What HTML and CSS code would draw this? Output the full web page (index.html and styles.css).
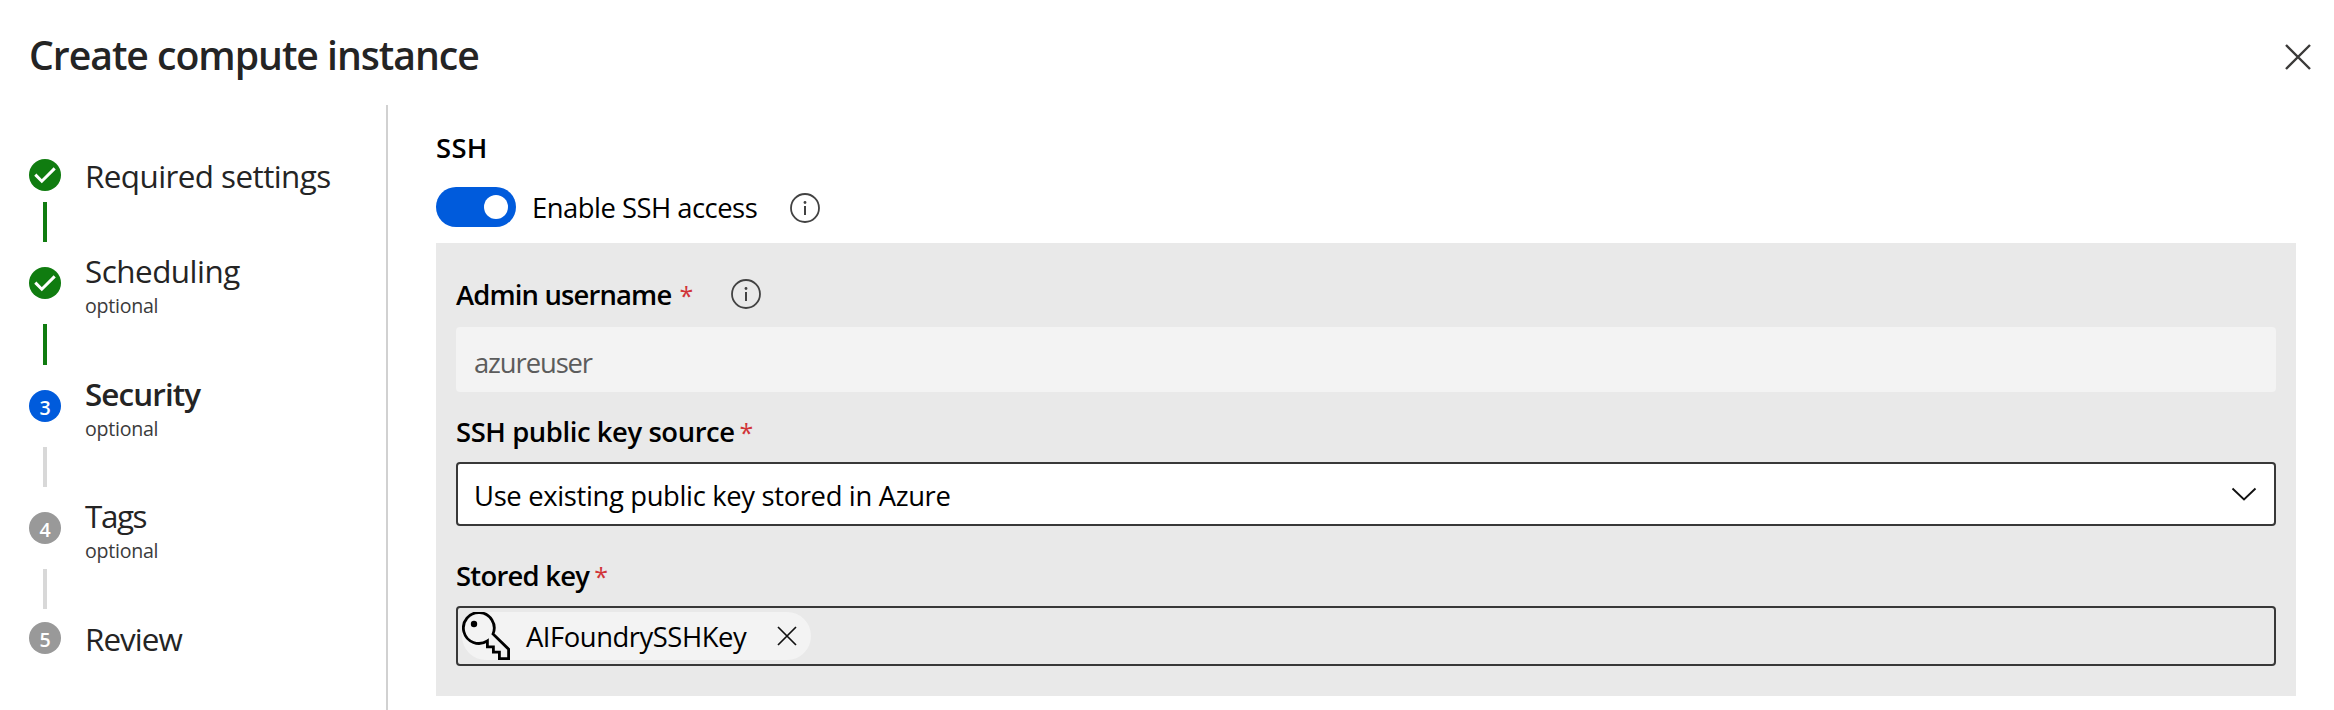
FILE: index.html
```html
<!DOCTYPE html>
<html lang="en">
<head>
<meta charset="utf-8">
<title>Create compute instance</title>
<link rel="stylesheet" href="styles.css">
</head>
<body>
<div class="dialog">
  <header class="header">
    <h1 class="title">Create compute instance</h1>
    <button class="icon-button" aria-label="Close">
      <svg width="28" height="28" viewBox="0 0 28 28"><path d="M2 2l24 24M26 2L2 26" fill="none" stroke="#3b3a39" stroke-width="2.4"/></svg>
    </button>
  </header>
  <div class="content">
    <nav class="steps">
      <div class="step step-single">
        <span class="marker done"><svg width="32" height="32" viewBox="0 0 32 32"><path d="M6.3 15.6l6.5 6.6L25.7 9.4" fill="none" stroke="#fff" stroke-width="3"/></svg></span>
        <div class="step-text"><div class="step-label required">Required settings</div></div>
      </div>
      <span class="connector first done"></span>
      <div class="step">
        <span class="marker done"><svg width="32" height="32" viewBox="0 0 32 32"><path d="M6.3 15.6l6.5 6.6L25.7 9.4" fill="none" stroke="#fff" stroke-width="3"/></svg></span>
        <div class="step-text"><div class="step-label scheduling">Scheduling</div><div class="optional">optional</div></div>
      </div>
      <span class="connector tall done"></span>
      <div class="step">
        <span class="marker current">3</span>
        <div class="step-text"><div class="step-label security">Security</div><div class="optional">optional</div></div>
      </div>
      <span class="connector"></span>
      <div class="step">
        <span class="marker">4</span>
        <div class="step-text"><div class="step-label tags">Tags</div><div class="optional">optional</div></div>
      </div>
      <span class="connector last"></span>
      <div class="step step-single">
        <span class="marker">5</span>
        <div class="step-text"><div class="step-label review">Review</div></div>
      </div>
    </nav>
    <main class="main">
      <h2 class="section-title">SSH</h2>
      <div class="toggle-row">
        <span class="toggle" role="switch" aria-checked="true"><span class="knob"></span></span>
        <span class="toggle-label">Enable SSH access</span>
        <svg class="info" width="30" height="30" viewBox="0 0 30 30"><circle cx="15" cy="15" r="14" fill="none" stroke="#424242" stroke-width="1.8"/><circle cx="15" cy="9.5" r="1.4" fill="#424242"/><path d="M15 13v9" stroke="#424242" stroke-width="2"/></svg>
      </div>
      <section class="panel">
        <div class="field-label">
          <span class="name-admin">Admin username</span><span class="star spaced">*</span>
          <svg class="info info-admin" width="30" height="30" viewBox="0 0 30 30"><circle cx="15" cy="15" r="14" fill="none" stroke="#424242" stroke-width="1.8"/><circle cx="15" cy="9.5" r="1.4" fill="#424242"/><path d="M15 13v9" stroke="#424242" stroke-width="2"/></svg>
        </div>
        <div class="input"><span class="user">azureuser</span></div>
        <div class="field-label source-label"><span class="name-source">SSH public key source</span><span class="star">*</span></div>
        <div class="select">
          <span class="source">Use existing public key stored in Azure</span>
          <svg width="26" height="14" viewBox="0 0 26 14"><path d="M1.5 1.5L13 12.5 24.5 1.5" fill="none" stroke="#111" stroke-width="1.9"/></svg>
        </div>
        <div class="field-label stored-label"><span class="name-stored">Stored key</span><span class="star">*</span></div>
        <div class="picker">
          <span class="chip">
            <svg width="48" height="48" viewBox="0 0 48 48"><circle cx="12" cy="12" r="3.2"/><path d="M31 22A15.4 15.4 0 1 0 25.4 28.8V34.8H31.4V40.2H37.4V46.6H46.6V37.2L31 22Z" fill="none" stroke="#000" stroke-width="2.8"/></svg>
            <span class="key-name">AIFoundrySSHKey</span>
            <svg width="20" height="20" viewBox="0 0 20 20"><path d="M1 1l18 18M19 1L1 19" fill="none" stroke="#111" stroke-width="1.7"/></svg>
          </span>
        </div>
      </section>
    </main>
  </div>
</div>
</body>
</html>
```
FILE: styles.css
```css
* { box-sizing: border-box; }
body {
  margin: 0;
  background: #fff;
  color: #000;
  font-family: "Open Sans", "Noto Sans", sans-serif;
  font-size: 27.4px;
}
svg { display: block; flex: none; }
.dialog { height: 710px; display: flex; flex-direction: column; overflow: hidden; }
.header {
  flex: none;
  height: 105px;
  padding: 0 22px 0 29px;
  display: flex;
  justify-content: space-between;
  align-items: flex-start;
}
.title {
  margin: 25px 0 0;
  font-size: 39.2px;
  line-height: 60px;
  font-weight: 600;
  letter-spacing: -1.04px;
  color: #242424;
}
.icon-button { margin: 43px 0 0; padding: 0; border: 0; background: none; }
.content { flex: 1; display: flex; }

.steps {
  width: 388px;
  flex: none;
  padding: 54px 0 0 29px;
  border-right: 2px solid #d1d1d1;
}
.step { display: flex; align-items: flex-start; height: 68px; }
.step-single { height: 32px; }
.marker {
  width: 32px;
  height: 32px;
  margin-top: 16px;
  flex: none;
  border-radius: 50%;
  background: #999;
  color: #fff;
  font-size: 19.6px;
  font-weight: 600;
  line-height: 35px;
  text-align: center;
}
.step-single .marker { margin-top: 0; }
.done { background: #107c10; }
.current { background: #005bdc; }
.step-text { margin-left: 24px; }
.step-label { font-size: 31.4px; line-height: 40px; color: #242424; white-space: nowrap; }
.step-single .step-label { line-height: 34px; }
.required { letter-spacing: -.57px; }
.scheduling { letter-spacing: -.5px; }
.security { font-weight: 600; letter-spacing: -.9px; }
.tags { letter-spacing: -1.4px; }
.review { letter-spacing: -.95px; }
.optional { font-size: 19.6px; line-height: 30px; letter-spacing: -.27px; color: #3b3b3b; }
.connector { display: block; width: 4px; height: 40px; margin: 5px 0 9px 14px; background: #d8d8d8; }
.connector.first { margin-top: 11px; }
.connector.tall { height: 41px; }
.connector.last { margin-bottom: 13px; }
.connector.done { background: #107c10; }

.main { flex: 1; padding: 23px 38px 0 48px; }
.section-title { margin: 0; line-height: 40px; font-size: 27.4px; font-weight: 600; letter-spacing: .33px; }
.toggle-row { display: flex; align-items: center; height: 40px; margin: 19px 0 16px; }
.toggle { width: 80px; height: 40px; padding: 8px; border-radius: 20px; background: #005bdc; display: flex; justify-content: flex-end; }
.knob { width: 24px; height: 24px; border-radius: 50%; background: #fff; }
.toggle-label { margin: 1px 0 0 16px; letter-spacing: -.5px; }
.info { margin: 2px 0 0 33px; }

.panel { height: 453px; padding: 32px 20px 30px; background: #e9e9e9; }
.field-label { display: flex; align-items: center; height: 40px; line-height: 42px; font-weight: 600; }
.name-admin { letter-spacing: -.83px; }
.name-source { letter-spacing: -.41px; }
.name-stored { letter-spacing: -.73px; }
.star { margin-left: 5px; font-size: 25px; font-weight: 500; color: #d13438; }
.star.spaced { margin-left: 8px; }
.info-admin { margin: 0 0 2px 38px; }
.input, .select { display: flex; align-items: center; padding: 0 18px; border-radius: 4px; }
.input { height: 65px; margin-top: 12px; padding-top: 5px; background: #f3f3f3; color: #5c5c5c; }
.user { letter-spacing: -1.1px; }
.source-label { margin: 20px 0 10px; }
.select { height: 64px; justify-content: space-between; padding: 0 17px 0 16px; border: 2px solid #383838; background: #fff; }
.source { padding-top: 3px; letter-spacing: -.34px; }
.stored-label { margin: 30px 0 10px; }
.picker { height: 60px; padding: 4px; border: 2px solid #383838; border-radius: 4px; }
.chip { display: flex; align-items: center; width: 349px; height: 48px; border-radius: 24px; background: #f3f3f3; }
.key-name { width: 251px; margin-left: 16px; letter-spacing: -.45px; }
```
